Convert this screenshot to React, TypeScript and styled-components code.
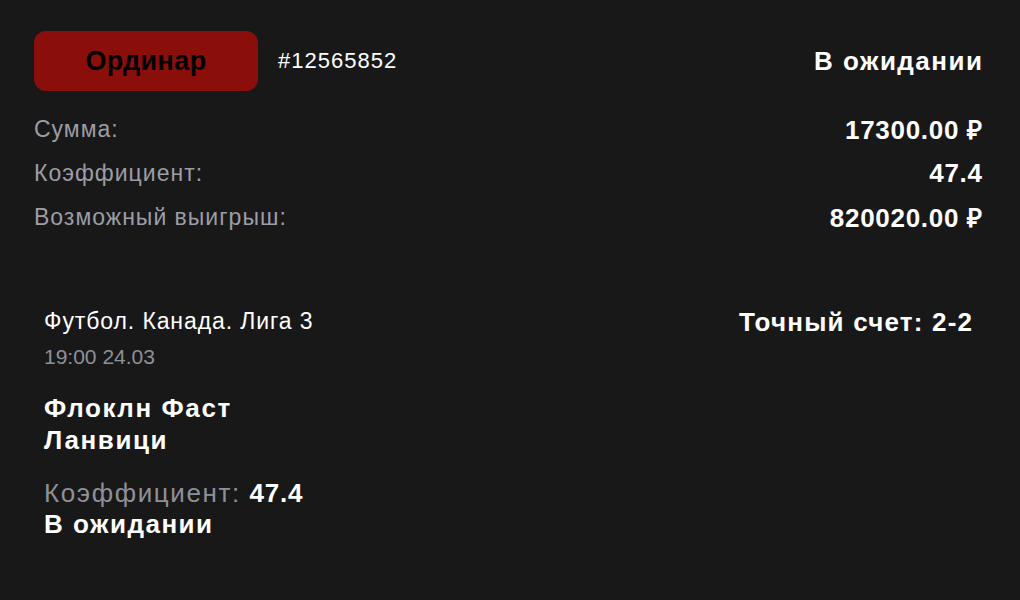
import React from "react";
import styled, { createGlobalStyle } from "styled-components";

const Global = createGlobalStyle`
  html, body { margin: 0; padding: 0; background: #181818; }
  body { font-family: "Liberation Sans", Arial, sans-serif; color: #fff; }
`;

const Page = styled.div`
  width: 1020px;
  height: 600px;
  box-sizing: border-box;
  padding: 31px 38px 0 34px;
  background: #181818;
`;

const Header = styled.div`
  display: flex;
  align-items: center;
  height: 60px;
`;

const Badge = styled.div`
  width: 224px;
  height: 60px;
  border-radius: 12px;
  background: #8a0f0a;
  color: #000;
  font-weight: 700;
  font-size: 27px;
  letter-spacing: 0.4px;
  display: flex;
  align-items: center;
  justify-content: center;
`;

const BetId = styled.div`
  margin-left: 20px;
  font-size: 22px;
  letter-spacing: 1px;
  color: #fff;
`;

const Strong = styled.div<{ $size?: number; $spacing?: number }>`
  font-size: ${(p) => p.$size ?? 26}px;
  letter-spacing: ${(p) => p.$spacing ?? 1.5}px;
  margin-right: -${(p) => p.$spacing ?? 1.5}px;
  font-weight: 700;
  color: #fff;
`;

const Status = styled(Strong)`
  margin-left: auto;
`;

const Summary = styled.div`
  margin-top: 16px;
  display: flex;
  flex-direction: column;
`;

const Row = styled.div`
  display: flex;
  justify-content: space-between;
  align-items: center;
  height: 44px;
`;

const Label = styled.span`
  font-size: 23px;
  letter-spacing: 1px;
  color: #9c9da6;
`;

const Value = styled.span`
  font-size: 26px;
  letter-spacing: 0.7px;
  margin-right: -0.7px;
  font-weight: 700;
`;

const Event = styled.div`
  margin-top: 68px;
  padding: 0 10px;
  display: flex;
  justify-content: space-between;
  align-items: flex-start;
`;

const EventInfo = styled.div`
  display: flex;
  flex-direction: column;
`;

const League = styled.div`
  font-size: 23px;
  letter-spacing: 0.9px;
  line-height: 28px;
`;

const Time = styled.div`
  margin-top: 8px;
  font-size: 21px;
  line-height: 28px;
  color: #8e9099;
`;

const Teams = styled.div`
  margin-top: 21px;
  font-size: 26px;
  letter-spacing: 1.6px;
  font-weight: 700;
  line-height: 32px;
`;

const Odds = styled.div`
  margin-top: 22px;
  font-size: 26px;
  letter-spacing: 1.6px;
  line-height: 31px;
  color: #8e9099;
  & b {
    color: #fff;
    font-weight: 700;
    letter-spacing: 0.8px;
  }
`;

const EventStatus = styled(Strong)`
  line-height: 31px;
`;

const Market = styled(Strong)`
  line-height: 28px;
  margin-top: 1px;
`;

export default function App() {
  return (
    <>
      <Global />
      <Page>
        <Header>
          <Badge>Ординар</Badge>
          <BetId>#12565852</BetId>
          <Status>В ожидании</Status>
        </Header>
        <Summary>
          <Row>
            <Label>Сумма:</Label>
            <Value>17300.00 ₽</Value>
          </Row>
          <Row>
            <Label>Коэффициент:</Label>
            <Value>47.4</Value>
          </Row>
          <Row>
            <Label>Возможный выигрыш:</Label>
            <Value>820020.00 ₽</Value>
          </Row>
        </Summary>
        <Event>
          <EventInfo>
            <League>Футбол. Канада. Лига 3</League>
            <Time>19:00 24.03</Time>
            <Teams>
              Флоклн Фаст
              <br />
              Ланвици
            </Teams>
            <Odds>
              Коэффициент: <b>47.4</b>
            </Odds>
            <EventStatus>В ожидании</EventStatus>
          </EventInfo>
          <Market $spacing={1.2}>Точный счет: 2-2</Market>
        </Event>
      </Page>
    </>
  );
}
